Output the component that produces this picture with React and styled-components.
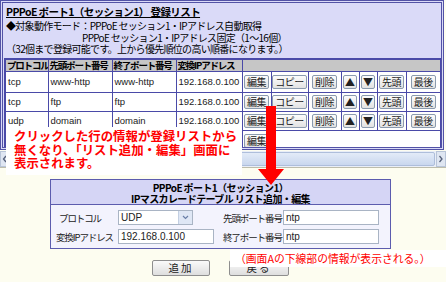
import styled, { createGlobalStyle } from "styled-components";

const GlobalStyle = createGlobalStyle`
  html, body {
    margin: 0;
    padding: 0;
    background: #fdfdf0;
  }
  body {
    font-family: "Noto Sans CJK JP", "Liberation Sans", sans-serif;
    color: #000;
  }
`;

const JP = `"Noto Sans CJK JP", sans-serif`;
const LATIN = `"Liberation Sans", "Noto Sans CJK JP", sans-serif`;

const Page = styled.div`
  position: relative;
  width: 446px;
  height: 282px;
  overflow: hidden;
  background: #fdfdf0;
`;

const Frame = styled.div`
  box-sizing: border-box;
  width: 444px;
  height: 150px;
  border: 3px double #5252a6;
  background: #dadaf8;
  padding: 1px 0 0 1px;
  overflow: hidden;
`;

const Title = styled.div`
  font-family: ${JP};
  font-size: 10.5px;
  font-weight: bold;
  letter-spacing: -0.6px;
  line-height: 12px;
  text-decoration: underline;
  padding: 2px 0 0 2px;
`;

const Info = styled.div`
  font-family: ${JP};
  font-size: 10px;
  letter-spacing: -0.7px;
  line-height: 11.5px;
  padding: 2px 0 0 2px;
`;

const InfoLine = styled.div`
  padding-left: ${(p) => p.$indent || 0}px;
  white-space: nowrap;
`;

const Table = styled.table`
  width: 436px;
  border-collapse: collapse;
  margin: 3px 0 0 0;
  border: 2px solid #4a4aa8;
  background: #fff;
  table-layout: fixed;
`;

const Th = styled.th`
  height: 11px;
  padding: 0 0 0 1px;
  border: 1px solid #4a4aa8;
  background: #c6c6c6;
  font-family: ${JP};
  font-size: 9.5px;
  letter-spacing: -1.2px;
  font-weight: bold;
  text-align: left;
  white-space: nowrap;
  overflow: hidden;
  line-height: 11px;
`;

const Td = styled.td`
  height: ${(p) => p.$h || 18}px;
  padding: ${(p) => (p.$btn ? "0" : "0 2px")};
  border: 1px solid #4a4aa8;
  font-family: ${LATIN};
  font-size: 9.5px;
  color: #222;
  white-space: nowrap;
  overflow: hidden;
  text-align: ${(p) => (p.$btn ? "center" : "left")};
`;

const Btn = styled.button`
  height: 14px;
  padding: 0 ${(p) => (p.$tight ? 1 : 2)}px;
  border: 1px solid #8a9aae;
  border-radius: 2px;
  background: linear-gradient(#fcfcfc, #e2e2e2);
  font-family: ${JP};
  font-size: 10px;
  letter-spacing: ${(p) => (p.$tight ? 0 : -0.5)}px;
  line-height: 12px;
  color: #222;
  white-space: nowrap;
  cursor: pointer;
`;

const ScrollBar = styled.div`
  display: flex;
  width: 446px;
  height: 16px;
  margin-top: 1px;
  background: #e9eef7;
  border-bottom: 1px solid #bdbdac;
`;

const ScrollArrow = styled.div`
  width: 10px;
  display: flex;
  align-items: center;
  justify-content: center;
  background: #dfe6f2;
  border: 1px solid #b8c4d8;
  box-sizing: border-box;
`;

const Thumb = styled.div`
  flex: 1;
  margin: 1px 1px;
  border: 1px solid #aebedb;
  border-radius: 2px;
  background: linear-gradient(#e3ebf8, #c9d7ee);
`;

const Dialog = styled.div`
  box-sizing: border-box;
  width: 341px;
  margin: 11px 0 0 50px;
  border: 1px solid #5c5cae;
  background: #f3f3fd;
`;

const DialogHead = styled.div`
  height: 25px;
  box-sizing: border-box;
  padding-top: 2px;
  background: #d5d5f5;
  border-bottom: 1px solid #5c5cae;
  font-family: ${JP};
  font-size: 10px;
  font-weight: bold;
  letter-spacing: -0.6px;
  line-height: 11px;
  text-align: center;
`;

const FormGrid = styled.div`
  display: grid;
  grid-template-columns: 62px 105px 60px 96px;
  grid-auto-rows: 15px;
  row-gap: 4px;
  align-items: center;
  padding: 5px 0 4px 5px;
`;

const Label = styled.div`
  font-family: ${JP};
  font-size: 9.5px;
  letter-spacing: -1.1px;
  color: #222;
  white-space: nowrap;
  padding-left: ${(p) => p.$pad || 0}px;
`;

const Input = styled.div`
  box-sizing: border-box;
  width: ${(p) => p.$w || 96}px;
  height: 15px;
  border: 1px solid #a9b4c4;
  background: #fff;
  font-family: ${LATIN};
  font-size: 10px;
  line-height: 13px;
  padding-left: 2px;
  color: #222;
`;

const Select = styled(Input)`
  display: flex;
  justify-content: space-between;
`;

const Drop = styled.div`
  width: 13px;
  height: 13px;
  background: #dfe7f5;
  border-left: 1px solid #c3cfe2;
  display: flex;
  align-items: center;
  justify-content: center;
`;

const ButtonRow = styled.div`
  display: flex;
  gap: 19px;
  margin: 11px 0 0 152px;
`;

const FormBtn = styled.button`
  width: ${(p) => p.$w || 58}px;
  height: 16px;
  border: 1px solid #8e8e8e;
  border-radius: 2px;
  background: linear-gradient(#fafafa, #dedede);
  font-family: ${JP};
  font-size: 10.5px;
  line-height: 12px;
  letter-spacing: 2px;
  color: #222;
  padding: 0;
`;

const Note = styled.div`
  position: absolute;
  left: 6px;
  top: 127px;
  width: 236px;
  height: 48px;
  box-sizing: border-box;
  padding: 3px 0 0 8px;
  background: #fff;
  color: #f00;
  font-family: ${JP};
  font-size: 12.4px;
  font-weight: bold;
  line-height: 13.5px;
  white-space: nowrap;
`;

const Caption = styled.div`
  position: absolute;
  left: 230px;
  top: 250px;
  width: 216px;
  height: 17px;
  box-sizing: border-box;
  padding-left: 5px;
  background: #fff;
  color: #f00;
  font-family: ${JP};
  font-size: 10.8px;
  line-height: 17px;
  white-space: nowrap;
`;

const Arrow = styled.svg`
  position: absolute;
  left: 256px;
  top: 106px;
`;

const rows = [
  ["tcp", "www-http", "www-http", "192.168.0.100"],
  ["tcp", "ftp", "ftp", "192.168.0.100"],
  ["udp", "domain", "domain", "192.168.0.100"],
];

const colWidths = [43, 64, 64, 66, 29, 37, 33, 18, 18, 29, 35];

function ActionCells() {
  return (
    <>
      <Td $btn><Btn>編集</Btn></Td>
      <Td $btn><Btn>コピー</Btn></Td>
      <Td $btn><Btn>削除</Btn></Td>
      <Td $btn><Btn $tight>▲</Btn></Td>
      <Td $btn><Btn $tight>▼</Btn></Td>
      <Td $btn><Btn>先頭</Btn></Td>
      <Td $btn><Btn>最後</Btn></Td>
    </>
  );
}

function Chevron({ dir }) {
  const d = dir === "left" ? "M4 1 L1.5 4 L4 7" : "M1.5 1 L4 4 L1.5 7";
  return (
    <svg width="6" height="8" viewBox="0 0 6 8">
      <path d={d} fill="none" stroke="#56607a" strokeWidth="1.3" />
    </svg>
  );
}

export default function App() {
  return (
    <Page>
      <GlobalStyle />
      <Frame>
        <Title>PPPoE ポート1（セッション1） 登録リスト</Title>
        <Info>
          <InfoLine>◆対象動作モード：PPPoE セッション1・IPアドレス自動取得</InfoLine>
          <InfoLine $indent={76}>PPPoE セッション1・IPアドレス固定（1～16個）</InfoLine>
          <InfoLine>（32個まで登録可能です。上から優先順位の高い順番になります。）</InfoLine>
        </Info>
        <Table>
          <colgroup>
            {colWidths.map((w, i) => (
              <col key={i} style={{ width: w }} />
            ))}
          </colgroup>
          <thead>
            <tr>
              <Th>プロトコル</Th>
              <Th>先頭ポート番号</Th>
              <Th>終了ポート番号</Th>
              <Th>変換IPアドレス</Th>
              <Th colSpan={7}></Th>
            </tr>
          </thead>
          <tbody>
            {rows.map((r, i) => (
              <tr key={i}>
                {r.map((c, j) => (
                  <Td key={j} $h={i === 0 ? 20 : 18}>{c}</Td>
                ))}
                <ActionCells />
              </tr>
            ))}
            <tr>
              <Td $h={20}></Td>
              <Td></Td>
              <Td></Td>
              <Td></Td>
              <Td $btn><Btn>編集</Btn></Td>
              <Td colSpan={6}></Td>
            </tr>
          </tbody>
        </Table>
      </Frame>
      <ScrollBar>
        <ScrollArrow><Chevron dir="left" /></ScrollArrow>
        <Thumb />
        <ScrollArrow><Chevron dir="right" /></ScrollArrow>
      </ScrollBar>
      <Dialog>
        <DialogHead>
          <div>PPPoE ポート1（セッション1）</div>
          <div>IPマスカレードテーブル リスト追加・編集</div>
        </DialogHead>
        <FormGrid>
          <Label $pad={3}>プロトコル</Label>
          <Select $w={75}>
            UDP
            <Drop>
              <svg width="7" height="5" viewBox="0 0 7 5">
                <path d="M1 1 L3.5 3.5 L6 1" fill="none" stroke="#6a7fa8" strokeWidth="1.2" />
              </svg>
            </Drop>
          </Select>
          <Label>先頭ポート番号</Label>
          <Input>ntp</Input>
          <Label>変換IPアドレス</Label>
          <Input>192.168.0.100</Input>
          <Label>終了ポート番号</Label>
          <Input>ntp</Input>
        </FormGrid>
      </Dialog>
      <ButtonRow>
        <FormBtn>追加</FormBtn>
        <FormBtn $w={60}>戻る</FormBtn>
      </ButtonRow>

      <Note>
        クリックした行の情報が登録リストから
        <br />
        無くなり、「リスト追加・編集」画面に
        <br />
        表示されます。
      </Note>
      <Caption>（画面Aの下線部の情報が表示される。）</Caption>
      <Arrow width="30" height="80" viewBox="0 0 30 80">
        <rect x="10" y="0" width="10" height="64" fill="#f00" />
        <path d="M2 63 L28 63 L15 79 Z" fill="#f00" />
      </Arrow>
    </Page>
  );
}
